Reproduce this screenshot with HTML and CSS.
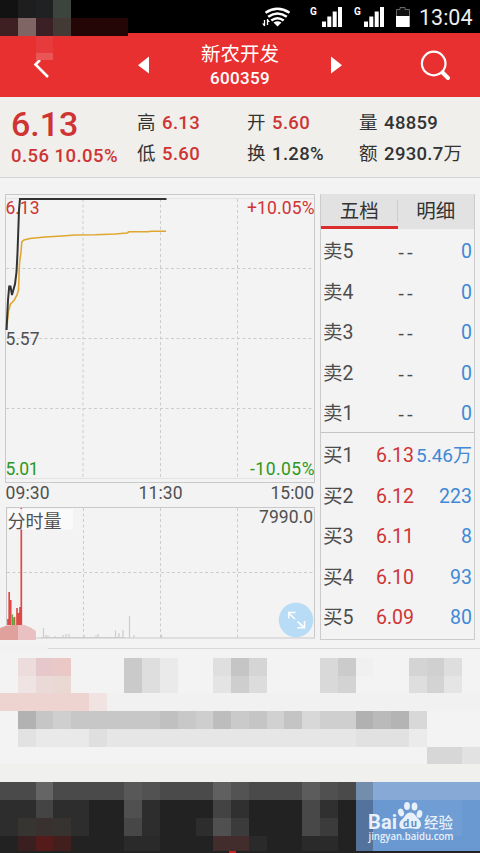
FILE: index.html
```html
<!DOCTYPE html>
<html lang="zh-CN">
<head>
    <meta charset="UTF-8">
    <meta name="viewport" content="width=device-width, initial-scale=1.0">
    <title>新农开发 600359</title>
    <link rel="stylesheet" href="styles.css">
</head>
<body>
<div class="phone">

    <!-- Status bar -->
    <div class="status-bar">
        <svg class="status-icons" width="150" height="33" viewBox="260 0 150 33">
            <g fill="none" stroke="#fff" stroke-width="2.5">
                <path d="M265.500 12.700Q277.500 5 289.500 12.700"/>
                <path d="M268.200 16.800Q277.500 10.200 286.800 16.800"/>
                <path d="M271.300 20.600Q277.500 15.800 283.700 20.600"/>
            </g>
            <path d="M273.500 22.600Q277.500 19.800 281.500 22.600L277.500 26.500Z" fill="#fff"/>
            <path d="M264.500 20v6M267.500 19v6" stroke="#fff" stroke-width="1.300"/>
            <path d="M262 23.500h2.500v3zM270 22h-2.500v-3z" fill="#fff"/>
            <text x="310" y="15" class="net">G</text>
            <path d="M322 21.500h4V27h-4zM327.300 16.500h4V27h-4zM332.700 11.500h4V27h-4zM338 7h4v20h-4z" fill="#fff"/>
            <text x="354" y="15" class="net">G</text>
            <path d="M364 21.500h4V27h-4zM369.300 16.500h4V27h-4zM374.700 11.500h4V27h-4zM380 7h4v20h-4z" fill="#fff"/>
            <path d="M396.500 26.500V9.500h3.500v-2h5v2h4.500v17z" fill="#111" stroke="#666"/>
            <path d="M396 16h13.500v11H396z" fill="#fff"/>
        </svg>
        <span class="clock">13:04</span>
    </div>

    <!-- Title bar -->
    <div class="title-bar">
        <svg width="180" height="64" viewBox="0 33 180 64">
            <path d="M40 60L35.500 64.500L48 77" fill="none" stroke="#fff" stroke-width="2.600"/>
            <path d="M149 56.500v17L138 65.300z" fill="#fff"/>
        </svg>
        <div class="stock">
            <div class="stock-name">新农开发</div>
            <div class="stock-code">600359</div>
        </div>
        <svg width="180" height="64" viewBox="300 33 180 64">
            <path d="M331 56.500v17L342 65.300z" fill="#fff"/>
            <circle cx="433.700" cy="63.500" r="11.800" fill="none" stroke="#fff" stroke-width="2.200"/>
            <path d="M442.500 72.500L448 78" stroke="#fff" stroke-width="4" stroke-linecap="round"/>
        </svg>
    </div>

    <!-- Quote summary -->
    <div class="summary">
        <div class="last">
            <div class="price">6.13</div>
            <div class="change">0.56 10.05%</div>
        </div>
        <div class="stat-grid">
            <div>高 <b class="up">6.13</b></div>
            <div>开 <b class="up">5.60</b></div>
            <div>量 <b>48859</b></div>
            <div>低 <b class="up">5.60</b></div>
            <div>换 <b>1.28%</b></div>
            <div>额 <b>2930.7</b>万</div>
        </div>
    </div>

    <div class="main">
        <!-- Time chart and volume -->
        <svg class="chart" width="320" height="470" viewBox="0 178 320 470">
            <g class="grid">
                <path d="M83 199V479M160.500 199V479M237.500 199V479"/>
                <path d="M6 268.500H314M6 338.500H314M6 408.500H314"/>
                <path d="M83.500 508V638M160.500 508V638M237.500 508V638M7 572.500H314"/>
            </g>
            <path d="M6 198.500H314M6 478.500H314" class="inner"/>
            <rect x="5.500" y="194.500" width="309" height="288" class="frame"/>
            <rect x="6.500" y="507.500" width="308" height="130.500" class="frame"/>

            <text x="5.500" y="214" class="up" textLength="34">6.13</text>
            <text x="247" y="214" class="up" textLength="67.500">+10.05%</text>
            <text x="5.500" y="345" textLength="34">5.57</text>
            <text x="5.500" y="475" class="down" textLength="33">5.01</text>
            <text x="250" y="475" class="down" textLength="64.500">-10.05%</text>
            <text x="5.500" y="499" textLength="44">09:30</text>
            <text x="138.500" y="499" textLength="44">11:30</text>
            <text x="270.500" y="499" textLength="43.500">15:00</text>
            <text x="259" y="523" textLength="54">7990.0</text>

            <path class="average" d="M6.500 330L8.500 311L10.500 304L14 300.500L17 295L18.500 290L19.500 263L21 252L21.800 242L24 240L30 238.500L45 237L62 236L75 235L95 234.800L115 234L127 233L129 231.800H148L151 231.200H166"/>
            <path class="line" d="M6.500 330L8 300L9.200 286.500H10.500L12 295L15 284L16.500 272L17.500 253L19 210L20 199H166.500"/>

            <!-- Volume bars -->
            <path d="M8 625V619M9.200 625V592M10.700 625V600M14.500 625V617M17 625V608M18.700 625V613M20 625V607M21.300 625V508" stroke="#df4848" stroke-width="1.700"/>
            <path d="M12.500 625V614.500M14 625V618" stroke="#55a53c" stroke-width="1.300"/>
            <path d="M41 637.500H125M43.500 638V628M46 638V635M48 638V635.500M55 638V636M63 638V635M66 638V634M69 638V634M84 638V635M96 638V635.500M98 638V634M115.500 638V630.500M119 638V633M123 638V630M129.500 638V616M134 638V635M161.500 638V634.500" stroke="#ccc" stroke-width="1.200" fill="none"/>
            <rect x="8" y="509" width="65" height="20.500" fill="#fbfbfb" opacity=".88"/>
            <text x="7.500" y="527.500" class="volume-title" textLength="54">分时量</text>
            <path d="M0 628Q6 625 12 625H24Q30 627 35.500 631V640H0z" fill="#e0a09b"/>
            <path d="M18 625H24Q30 627 35.500 631V640H18z" fill="#eac1c3"/>

            <circle cx="296" cy="620" r="17.300" fill="#b8dcf5"/>
            <path d="M302 626L297.500 621.500M289 613.500L295 619M288.700 618.500V612.500H295.500M297.500 627.700H304.500V621M304 627.500L299 622.500" fill="none" stroke="#fff" stroke-width="1.500"/>
        </svg>

        <!-- Order book -->
        <div class="book">
            <div class="tabs">
                <div class="tab selected">五档</div>
                <div class="tab">明细</div>
            </div>
            <div class="orders">
                <div class="row"><span>卖5</span><i>--</i><em>0</em></div>
                <div class="row"><span>卖4</span><i>--</i><em>0</em></div>
                <div class="row"><span>卖3</span><i>--</i><em>0</em></div>
                <div class="row"><span>卖2</span><i>--</i><em>0</em></div>
                <div class="row"><span>卖1</span><i>--</i><em>0</em></div>
            </div>
            <div class="orders buy">
                <div class="row"><span>买1</span><b>6.13</b><em>5.46万</em></div>
                <div class="row"><span>买2</span><b>6.12</b><em>223</em></div>
                <div class="row"><span>买3</span><b>6.11</b><em>8</em></div>
                <div class="row"><span>买4</span><b>6.10</b><em>93</em></div>
                <div class="row"><span>买5</span><b>6.09</b><em>80</em></div>
            </div>
        </div>
    </div>

    <!-- Blurred out areas, one unit is one block -->
    <svg class="mosaic" width="480" height="853" viewBox="0 0 27 47.981" preserveAspectRatio="none" shape-rendering="crispEdges">
        <path d="M0 0h2v1H0z" fill="#121212"/>
        <path d="M1 0h1v1H1z" fill="#1e1e1e"/><path d="M2 0h1v1H2z" fill="#1f2122"/>
        <path d="M3 0h1v1H3z" fill="#3b443d"/>
        <path d="M0 1h1v1H0z" fill="#3f2022"/><path d="M1 1h1v1H1z" fill="#806565"/>
        <path d="M2 1h1v1H2z" fill="#3b2026"/><path d="M3 1h1v1H3z" fill="#433a36"/>
        <path d="M4 1h3.200v1H4z" fill="#240606"/>
        <path d="M2 2h1v1H2z" fill="#e63a3d"/><path d="M2 3h1v.35H2z" fill="#ea5556"/>

        <path d="M0 36.200h2.700v.5H0z" fill="#f1f1f1"/>
        <path d="M1 37h1v1H1z" fill="#eddcdc"/><path d="M2 37h1v1H2z" fill="#e6c8cb"/><path d="M3 37h1v1H3z" fill="#e9c8c6"/>
        <path d="M1 38h1v1H1z" fill="#efe4e3"/><path d="M2 38h1v1H2z" fill="#ead9d6"/><path d="M3 38h1v1H3z" fill="#ead8d3"/>
        <path d="M7 37h1v2H7z" fill="#cacaca"/><path d="M8 37h1v2H8z" fill="#dedede"/><path d="M9 37h1v2H9z" fill="#eaeaea"/>
        <path d="M12 37h1v1h-1z" fill="#dfdfdf"/><path d="M13 37h1v1h-1z" fill="#c5c5c5"/><path d="M14 37h1v1h-1z" fill="#d5d5d5"/>
        <path d="M12 38h1v1h-1z" fill="#e4e4e4"/><path d="M13 38h1v1h-1z" fill="#cecece"/><path d="M14 38h1v1h-1z" fill="#dcdcdc"/>
        <path d="M18 37h1v2h-1z" fill="#d9d9d9"/><path d="M19 37h1v1h-1z" fill="#cbcbcb"/><path d="M19 38h1v1h-1z" fill="#d3d3d3"/><path d="M20 37h1v1h-1z" fill="#f0f0f0"/>
        <path d="M23 37h1v1h-1z" fill="#d4d4d4"/><path d="M24 37h1v1h-1z" fill="#d0d0d0"/><path d="M25 37h1v1h-1z" fill="#dedede"/>
        <path d="M23 38h1v1h-1z" fill="#dedede"/><path d="M24 38h1v1h-1z" fill="#d3d3d3"/><path d="M25 38h1v1h-1z" fill="#e5e5e5"/>
        <path d="M0 39h5v1H0z" fill="#edd4d1"/><path d="M5 39h1v1H5z" fill="#f0e3e2"/>
        <path d="M6 39h21v1H6z" fill="#f1f1f1"/>
        <path d="M1 40h1v1H1z" fill="#b2b2b2"/><path d="M2 40h1v1H2z" fill="#c6c6c6"/><path d="M3 40h1v1H3z" fill="#cfcfcf"/>
        <path d="M4 40h5v1H4z" fill="#c7c7c7"/><path d="M9 40h1v1H9z" fill="#c0c0c0"/><path d="M10 40h1v1h-1z" fill="#c8c8c8"/>
        <path d="M11 40h1v1h-1z" fill="#cecece"/><path d="M12 40h1v1h-1z" fill="#bdbdbd"/><path d="M13 40h1v1h-1z" fill="#cacaca"/>
        <path d="M14 40h1v1h-1z" fill="#c5c5c5"/><path d="M15 40h1v1h-1z" fill="#d1d1d1"/><path d="M16 40h1v1h-1z" fill="#c4c4c4"/>
        <path d="M17 40h1v1h-1z" fill="#d8d8d8"/><path d="M18 40h2v1h-2z" fill="#cfcfcf"/><path d="M20 40h1v1h-1z" fill="#b1b1b1"/>
        <path d="M21 40h1v1h-1z" fill="#bababa"/><path d="M22 40h1v1h-1z" fill="#b4b4b4"/><path d="M23 40h1v1h-1z" fill="#d8d8d8"/>
        <path d="M1 41h1v1H1z" fill="#e2e2e2"/><path d="M2 41h3v1H2z" fill="#e9e9e9"/><path d="M5 41h1v1H5z" fill="#dfdfdf"/>
        <path d="M6 41h14v1H6z" fill="#e6e6e6"/><path d="M20 41h3v1h-3z" fill="#e1e1e1"/><path d="M23 41h1v1h-1z" fill="#ebebeb"/>
        <path d="M24 42h2v1h-2z" fill="#d7d7d7"/><path d="M26 42h1v1h-1z" fill="#e2e2e2"/>
        <path d="M0 43h27v1H0z" fill="#f0f0ef"/>

        <path d="M0 44h27v4H0z" fill="#222"/><path d="M0 44h20v1H0z" fill="#4a4a4a"/>
        <path d="M2 44h1v1H2z" fill="#656565"/><path d="M7 44h1v1H7z" fill="#585858"/><path d="M8 44h1v1H8z" fill="#525252"/>
        <path d="M12 44h1v1h-1z" fill="#606060"/><path d="M13 44h1v1h-1z" fill="#535353"/><path d="M17 44h1v1h-1z" fill="#5c5c5c"/><path d="M18 44h1v1h-1z" fill="#505050"/>
        <path d="M0 45h2v1H0zM3 45h2v1H3zM8 45h1v2H8z" fill="#2d2d2d"/><path d="M2 45h1v1H2z" fill="#444"/>
        <path d="M7 45h1v1H7z" fill="#505050"/><path d="M7 46h1v1H7z" fill="#474747"/>
        <path d="M12 45h1v1h-1z" fill="#434343"/><path d="M12 46h1v1h-1z" fill="#505050"/>
        <path d="M13 45h1v1h-1zM18 45h1v1h-1z" fill="#303030"/><path d="M13 46h1v1h-1zM18 46h1v1h-1z" fill="#3b3b3b"/><path d="M17 45h1v2h-1z" fill="#484848"/>
        <path d="M0 46h1v1H0zM4 46h1v1H4zM11 46h1v1h-1z" fill="#2d2d2d"/><path d="M1 46h1v1H1z" fill="#373532"/><path d="M2 46h1v1H2z" fill="#383130"/><path d="M3 46h1v1H3z" fill="#363331"/>
        <path d="M1 47h1v1H1z" fill="#391f1f"/><path d="M2 47h1v1H2z" fill="#541b1b"/><path d="M3 47h1v1H3z" fill="#421e1c"/>
        <path d="M7 47h2v1H7zM14 47h1v1h-1zM17 47h2v1h-2z" fill="#2a2a2a"/><path d="M12 47h2v1h-2z" fill="#432c2c"/>
        <path d="M20 44h1v1h-1z" fill="#728eac"/><path d="M20 45h1v3h-1z" fill="#53739c"/>
        <path d="M21 44h6v1h-6z" fill="#86a9d5"/><path d="M21 45h6v3h-6z" fill="#6a99d2"/><path d="M23 45h3v2h-3z" fill="#709dd3"/>
        <path d="M0 47.850h27v.15H0z" fill="#222"/><path d="M12.900 47.850h.4v.15h-.4z" fill="#c22"/>
    </svg>

    <!-- Watermark -->
    <svg class="watermark" width="110" height="56" viewBox="360 797 110 56">
        <g fill="#e8f0fa">
            <text x="368" y="828.500" class="brand" textLength="29">Bai</text>
            <ellipse cx="401" cy="812.500" rx="2.900" ry="3.900" transform="rotate(-20 401 812.500)"/>
            <ellipse cx="407" cy="806" rx="2.900" ry="4"/>
            <ellipse cx="414.500" cy="806.500" rx="2.900" ry="4"/>
            <ellipse cx="419.500" cy="814" rx="2.800" ry="3.900" transform="rotate(15 419.500 814)"/>
            <path d="M410.300 812.500C406 812.500 405 817 402 819.500C398 822.500 398.500 829 403.500 829Q410 827.500 416 829C421.500 829.500 422.500 823 419 819.500C416 817 415 812.500 410.300 812.500z"/>
            <text x="424" y="827.500" class="jingyan" textLength="29">经验</text>
            <text x="368.500" y="839.500" class="url" textLength="85" lengthAdjust="spacingAndGlyphs">jingyan.baidu.com</text>
        </g>
        <text x="403" y="827" class="du" textLength="14">du</text>
    </svg>
</div>
</body>
</html>
```

FILE: styles.css
```css
body {
    margin: 0;
    background-color: #f3f3f3;
    font-family: Roboto, "Noto Sans CJK SC", sans-serif;
    color: #444;
}

.phone {
    position: relative;
    width: 480px;
    height: 853px;
    overflow: hidden;
}

.status-bar {
    display: flex;
    justify-content: flex-end;
    height: 33px;
    background-color: #000;
}

.net {
    font-size: 10px;
    font-weight: bold;
    fill: #fff;
}

.clock {
    width: 61px;
    margin-left: 9px;
    line-height: 35px;
    font-size: 21.5px;
    color: #eee;
    white-space: nowrap;
}

.title-bar {
    display: flex;
    height: 64px;
    background-color: #e83030;
    color: #fff;
}

.stock {
    width: 120px;
    text-align: center;
}

.stock-name {
    padding-top: 9px;
    font-size: 19.5px;
    line-height: 26px;
}

.stock-code {
    font-size: 17px;
    font-weight: 500;
    line-height: 21px;
    letter-spacing: 0.3px;
}

.summary {
    display: flex;
    box-sizing: border-box;
    height: 81px;
    padding: 9px 0 0 11px;
    background-color: #f0efeb;
    border-bottom: 1px solid #d5d5d5;
}

.last {
    width: 126px;
    color: #cf3434;
    font-weight: 500;
    white-space: nowrap;
}

.price {
    font-size: 34px;
    line-height: 37px;
}

.change {
    font-size: 18.5px;
    line-height: 26px;
    letter-spacing: 0.45px;
}

.stat-grid {
    display: grid;
    grid-template-columns: 110px 112px 111px;
    grid-template-rows: 31px 31px;
    padding-top: 1px;
    font-size: 18.5px;
    line-height: 32px;
    color: #333;
    white-space: nowrap;
}

.stat-grid b {
    margin-left: 2px;
    font-weight: 500;
    letter-spacing: 0.3px;
}

.up {
    color: #cf3434;
    fill: #cf3434;
}

.down {
    fill: #2c981d;
}

.main {
    display: flex;
    height: 470px;
    border-bottom: 1px solid #d8d8d8;
}

.chart text {
    font-size: 17.5px;
}

.chart text:not(.up):not(.down) {
    fill: #505050;
}

.chart text.volume-title {
    font-size: 18px;
    fill: #333;
}

.grid {
    fill: none;
    stroke: #ccc;
    stroke-dasharray: 3 2.5;
}

.frame {
    fill: none;
    stroke: #c9c9c9;
}

.inner {
    stroke: #e3e3e3;
}

.average {
    fill: none;
    stroke: #e0a62f;
    stroke-width: 1.6;
}

.line {
    fill: none;
    stroke: #333;
    stroke-width: 2;
}

.book {
    box-sizing: border-box;
    width: 155px;
    height: 446px;
    margin-top: 16px;
    border: 1px solid #ccc;
    border-top: 0;
}

.tabs {
    display: flex;
    height: 35px;
    background: linear-gradient(#ccc, #ccc) 76px 6px / 1px 22px no-repeat #e2e2e2;
}

.tab {
    box-sizing: border-box;
    width: 50%;
    font-size: 19.5px;
    line-height: 35px;
    text-align: center;
    color: #333;
}

.selected {
    border-bottom: 3px solid #dc2d2d;
}

.orders {
    height: 203px;
}

.buy {
    border-top: 1px solid #c4c4c4;
}

.row {
    display: grid;
    grid-template-columns: 53px 40px 1fr;
    height: 40.6px;
    padding: 0 2px;
    font-size: 19.5px;
    line-height: 45px;
    color: #4d4d4d;
    white-space: nowrap;
}

.row i {
    padding-left: 22px;
    font-family: "Open Sans", sans-serif;
    font-style: normal;
    letter-spacing: 2.5px;
}

.row b {
    font-weight: normal;
    color: #cf3434;
}

.row em {
    justify-self: end;
    font-style: normal;
    color: #4189d6;
}

.buy .row:first-child em {
    font-size: 19px;
}

.mosaic {
    position: absolute;
    left: 0;
    top: 0;
}

.watermark {
    position: absolute;
    left: 360px;
    top: 797px;
}

.brand {
    font-size: 20px;
    font-weight: 700;
}

.jingyan {
    font-size: 14.5px;
    font-weight: 500;
}

.url {
    font-family: "Open Sans", sans-serif;
    font-size: 10px;
    font-weight: 600;
}

.du {
    font-size: 11px;
    font-weight: bold;
    fill: #5f8fcb;
}
```
